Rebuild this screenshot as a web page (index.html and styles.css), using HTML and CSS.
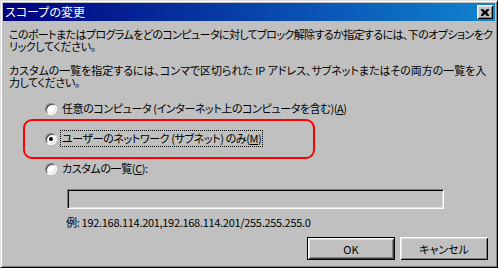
FILE: index.html
```html
<!DOCTYPE html>
<html>
    <head>
        <meta charset="utf-8">
        <title>スコープの変更</title>
        <link rel="stylesheet" href="styles.css">
    </head>
    <body>
        <div class="window">
            <div class="titlebar">
                <span class="title">スコープの変更</span>
                <span class="close">
                    <svg width="8" height="7" viewBox="0 0 8 7">
                        <path d="M0 0h2l2 2 2-2h2v1l-2 2.5 2 2.5v1h-2l-2-2-2 2h-2v-1l2-2.5-2-2.5z" fill="#000"/>
                    </svg>
                </span>
            </div>

            <div class="content">
                <p class="intro">
                    <span class="line tight">このポートまたはプログラムをどのコンピュータに対してブロック解除するか指定するには、下のオプションをク</span>
                    <span class="line">リックしてください。</span>
                </p>
                <p class="intro">
                    <span class="line loose">カスタムの一覧を指定するには、コンマで区切られた IP アドレス、サブネットまたはその両方の一覧を入</span>
                    <span class="line">力してください。</span>
                </p>

                <div class="options">
                    <label class="option">
                        <span class="radio"></span>
                        <span class="label">任意のコンピュータ (インターネット上のコンピュータを含む)(<u>A</u>)</span>
                    </label>
                    <label class="option">
                        <span class="radio checked"></span>
                        <span class="label focused">ユーザーのネットワーク (サブネット) のみ(<u>M</u>)</span>
                    </label>
                    <label class="option">
                        <span class="radio"></span>
                        <span class="label">カスタムの一覧(<u>C</u>):</span>
                    </label>
                </div>

                <div class="textbox"></div>
                <div class="example">例: 192.168.114.201,192.168.114.201/255.255.255.0</div>

                <div class="buttons">
                    <button class="btn default">OK</button>
                    <button class="btn">キャンセル</button>
                </div>
            </div>

            <!-- annotation ring round the selected option -->
            <div class="annotation"></div>
        </div>
    </body>
</html>
```

FILE: styles.css
```css
body {
    margin: 0;
    background: #c0c0c0;
}

body, button {
    font-family: "Noto Sans CJK JP", "Liberation Sans", sans-serif;
    font-size: 11px;
    letter-spacing: -0.4px;
    font-feature-settings: "palt";
    color: #000;
}

.window {
    position: relative;
    width: 498px;
    height: 268px;
    box-sizing: border-box;
    padding: 2px;
    background: #c0c0c0;
    border: 1px solid;
    border-color: #dfdfdf #000 #000 #dfdfdf;
    box-shadow: inset 1px 1px #fff, inset -1px -1px #808080;
    overflow: hidden;
}

.titlebar {
    display: flex;
    align-items: center;
    justify-content: space-between;
    height: 18px;
    padding: 0 2px 0 2px;
    background: linear-gradient(to right, #000080, #1084d0);
}

.title {
    color: #fff;
    font-size: 12px;
    letter-spacing: 0;
    line-height: 18px;
    white-space: nowrap;
}

.close {
    display: flex;
    align-items: center;
    justify-content: center;
    width: 16px;
    height: 14px;
    box-sizing: border-box;
    background: #c0c0c0;
    box-shadow: inset 1px 1px #fff, inset -1px -1px #000, inset 2px 2px #dfdfdf, inset -2px -2px #808080;
}

.content {
    padding: 7px 7px 0 6px;
}

.intro {
    margin: 0 0 12px 0;
    line-height: 12px;
}

.line {
    display: block;
    white-space: nowrap;
}

.line.tight {
    letter-spacing: -0.6px;
}

.line.loose {
    letter-spacing: -0.05px;
}

.options {
    display: flex;
    flex-direction: column;
    gap: 13px;
    padding-left: 36px;
    margin-top: 12px;
}

.option {
    display: flex;
    align-items: center;
    height: 17px;
}

.radio {
    position: relative;
    width: 12px;
    height: 12px;
    box-sizing: border-box;
    border-radius: 50%;
    background: #fff;
    border: 1px solid;
    border-color: #808080 #fff #fff #808080;
    box-shadow: inset 1px 1px #404040, inset -1px -1px #dfdfdf;
    margin-right: 3px;
}

.radio.checked::after {
    content: "";
    position: absolute;
    left: 3px;
    top: 3px;
    width: 4px;
    height: 4px;
    border-radius: 50%;
    background: #000;
}

.label {
    padding: 0 1px;
    line-height: 15px;
    border: 1px solid transparent;
    white-space: nowrap;
}

.label.focused {
    border: 1px dotted #000;
}

.textbox {
    width: 377px;
    height: 20px;
    box-sizing: border-box;
    margin: 12px 0 0 58px;
    border: 1px solid;
    border-color: #808080 #fff #fff #808080;
    box-shadow: inset 1px 1px #000, inset -1px -1px #dfdfdf;
    background: #c0c0c0;
}

.example {
    margin: 7px 0 0 57px;
    line-height: 12px;
    letter-spacing: -0.3px;
    white-space: nowrap;
}

.buttons {
    display: flex;
    justify-content: flex-end;
    gap: 5px;
    margin-top: 9px;
}

.btn {
    width: 88px;
    height: 23px;
    padding: 0;
    background: #c0c0c0;
    border: none;
    letter-spacing: 0;
    box-shadow: inset 1px 1px #fff, inset -1px -1px #000, inset 2px 2px #dfdfdf, inset -2px -2px #808080;
}

.btn.default {
    border: 1px solid #000;
    box-shadow: inset 1px 1px #fff, inset -1px -1px #404040, inset 2px 2px #dfdfdf, inset -2px -2px #808080;
}

.annotation {
    position: absolute;
    left: 22px;
    top: 118px;
    width: 288px;
    height: 36px;
    border: 2px solid #f00;
    border-radius: 9px;
}
```
